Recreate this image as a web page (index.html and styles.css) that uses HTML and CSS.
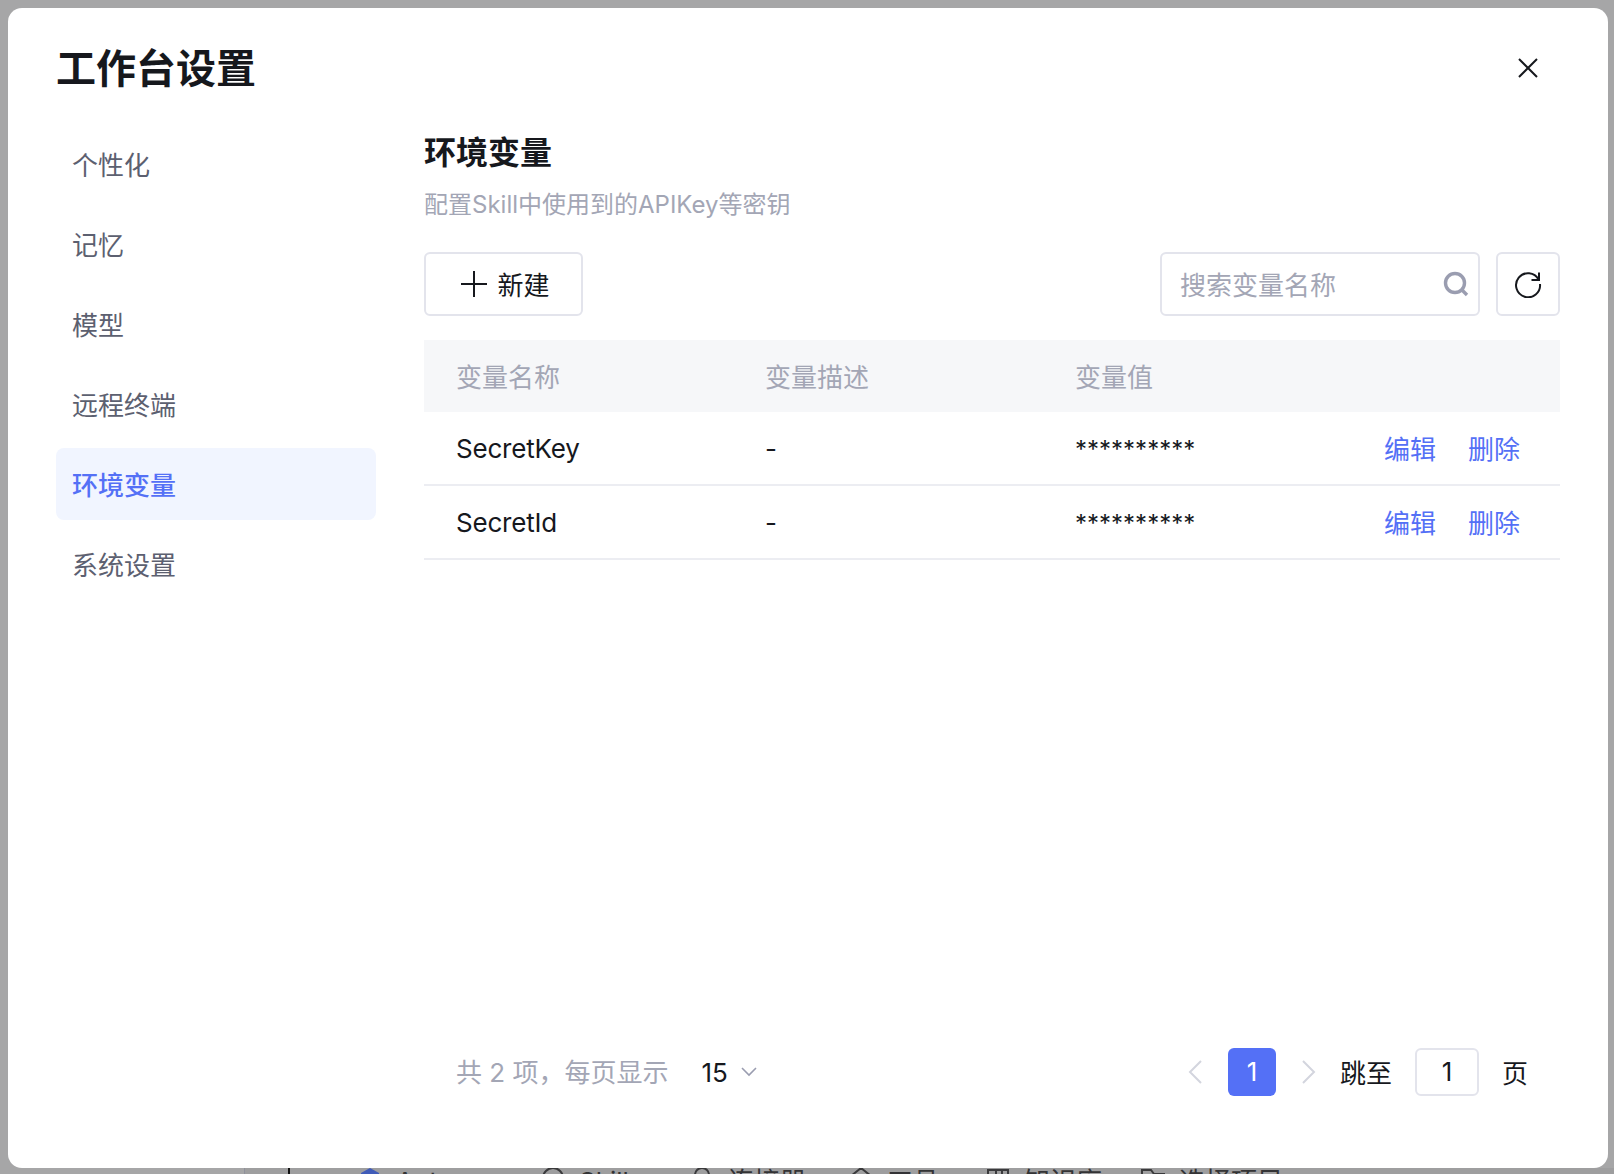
FILE: index.html
```html
<!DOCTYPE html>
<html lang="zh-CN">
<head>
    <meta charset="UTF-8">
    <title>工作台设置</title>
    <link rel="stylesheet" href="styles.css">
</head>
<body>
    <div class="backdrop-bar">
        <span class="bar-caret"></span>
        <span class="bar-item bar-auto"><svg class="bar-icon" viewBox="0 0 24 24"><path d="M12 2l9 5v10l-9 5-9-5V7z" fill="#3f5bb8"/></svg>Auto</span>
        <span class="bar-item bar-skill"><svg class="bar-icon" viewBox="0 0 24 24"><circle cx="12" cy="12" r="10" fill="none" stroke="#3a3a3c" stroke-width="2"/></svg>Skill</span>
        <span class="bar-item bar-conn"><svg class="bar-icon" viewBox="0 0 24 24"><path d="M5 22V9a7 7 0 0 1 14 0v13" fill="none" stroke="#3a3a3c" stroke-width="2"/></svg>连接器</span>
        <span class="bar-item bar-tool"><svg class="bar-icon" viewBox="0 0 24 24"><path d="M12 2l10 8v12H2V10z" fill="none" stroke="#3a3a3c" stroke-width="2"/></svg>工具</span>
        <span class="bar-item bar-know"><svg class="bar-icon bar-icon-low" viewBox="0 0 24 24"><path d="M2 1h20v22H2zM10 1v6h6V1" fill="none" stroke="#3a3a3c" stroke-width="2"/></svg>知识库</span>
        <span class="bar-item bar-proj"><svg class="bar-icon bar-icon-low" viewBox="0 0 24 24"><path d="M1 22V1h9l3 4h10v17z" fill="none" stroke="#3a3a3c" stroke-width="2"/></svg>选择项目</span>
    </div>

    <div class="modal">
        <div class="modal-header">
            <h1>工作台设置</h1>
            <svg class="close-icon" viewBox="0 0 20 20"><path d="M1 1l18 18M19 1L1 19"/></svg>
        </div>
        <div class="modal-body">
            <ul class="side-menu">
                <li>个性化</li>
                <li>记忆</li>
                <li>模型</li>
                <li>远程终端</li>
                <li class="active">环境变量</li>
                <li>系统设置</li>
            </ul>
            <div class="content">
                <h2>环境变量</h2>
                <p class="desc">配置Skill中使用到的APIKey等密钥</p>
                <div class="toolbar">
                    <button class="btn-new">
                        <svg class="plus-icon" viewBox="0 0 26 26"><path d="M13 0v26M0 13h26"/></svg>
                        <span class="btn-text">新建</span>
                    </button>
                    <div class="toolbar-right">
                        <div class="search-box">
                            <span class="btn-text">搜索变量名称</span>
                            <svg class="search-icon" viewBox="0 0 26 26"><circle cx="12" cy="12" r="9.5"/><path d="M19 19l5 5"/></svg>
                        </div>
                        <button class="btn-refresh">
                            <svg class="refresh-icon" viewBox="0 0 28 28"><path d="M24.6 9.5A12 12 0 1 0 26 14"/><path d="M25 2.5v7.5h-7.5"/></svg>
                        </button>
                    </div>
                </div>
                <div class="table">
                    <div class="row head">
                        <div>变量名称</div>
                        <div>变量描述</div>
                        <div>变量值</div>
                        <div></div>
                    </div>
                    <div class="row">
                        <div class="var-name">SecretKey</div>
                        <div>-</div>
                        <div class="masked">**********</div>
                        <div class="actions"><a>编辑</a><a>删除</a></div>
                    </div>
                    <div class="row">
                        <div class="var-name">SecretId</div>
                        <div>-</div>
                        <div class="masked">**********</div>
                        <div class="actions"><a>编辑</a><a>删除</a></div>
                    </div>
                </div>
                <div class="pagination">
                    <div class="page-total">
                        <span class="muted">共 2 项，每页显示</span>
                        <span class="page-size">15</span>
                        <svg class="size-arrow" viewBox="0 0 16 10"><path d="M1 1l7 7 7-7"/></svg>
                    </div>
                    <div class="page-nav">
                        <svg class="page-arrow" viewBox="0 0 14 24"><path d="M13 1L2 12l11 11"/></svg>
                        <span class="page-current">1</span>
                        <svg class="page-arrow" viewBox="0 0 14 24"><path d="M1 1l11 11L1 23"/></svg>
                        <span class="jump-label">跳至</span>
                        <span class="page-input">1</span>
                        <span class="page-unit">页</span>
                    </div>
                </div>
            </div>
        </div>
    </div>
</body>
</html>
```

FILE: styles.css
```css
* {
    box-sizing: border-box;
}
html, body {
    margin: 0;
    height: 100%;
    overflow: hidden;
}
body {
    background: #a6a6a7;
    color: #16181d;
    font-family: Inter, "Noto Sans CJK SC", sans-serif;
    font-size: 26px;
    padding: 8px 6px 6px 8px;
}
.backdrop-bar {
    position: absolute;
    left: 244px;
    top: 1168px;
    right: 0;
    height: 6px;
    overflow: hidden;
    background: #9e9e9f;
    border-left: 1px solid #8f919b;
    color: #333335;
    font-size: 26px;
}
.bar-caret {
    position: absolute;
    left: 43px;
    top: 0;
    width: 2px;
    height: 6px;
    background: #111;
}
.bar-item {
    position: absolute;
    top: -2px;
    display: flex;
    align-items: flex-start;
    gap: 14px;
    line-height: 32px;
    white-space: nowrap;
}
.bar-icon {
    width: 24px;
    height: 24px;
}
.bar-icon-low {
    margin-top: 3px;
}
.bar-auto { left: 113px; }
.bar-skill { left: 296px; }
.bar-conn { left: 445px; }
.bar-tool { left: 604px; }
.bar-know { left: 741px; }
.bar-proj { left: 896px; }

.modal {
    position: relative;
    height: 1160px;
    background: #fff;
    border-radius: 14px;
    padding: 0 48px;
    display: flex;
    flex-direction: column;
}
.modal-header {
    height: 120px;
    display: flex;
    align-items: center;
    justify-content: space-between;
    padding-right: 22px;
}
.modal-header h1 {
    margin: 2px 0 0;
    font-size: 40px;
    font-weight: 600;
    line-height: 56px;
}
.close-icon {
    width: 20px;
    height: 20px;
    fill: none;
    stroke: #16181d;
    stroke-width: 2;
}
.modal-body {
    flex-grow: 1;
    display: flex;
    gap: 48px;
    min-height: 0;
}
.side-menu {
    list-style: none;
    margin: 0;
    padding: 0;
    width: 320px;
    flex-shrink: 0;
    display: flex;
    flex-direction: column;
    gap: 8px;
}
.side-menu li {
    height: 72px;
    line-height: 75px;
    padding-left: 16px;
    border-radius: 8px;
    color: #5c6070;
}
.side-menu li.active {
    background: #f1f5ff;
    color: #5470f6;
    font-weight: 500;
}
.content {
    flex-grow: 1;
    display: flex;
    flex-direction: column;
    min-width: 0;
    padding: 3px 0 72px;
}
.content h2 {
    margin: 0;
    font-size: 32px;
    font-weight: 600;
    line-height: 44px;
}
.desc {
    margin: 12px 0 0;
    font-size: 24px;
    line-height: 36px;
    color: #a3a6b5;
}
.toolbar {
    margin-top: 29px;
    display: flex;
    justify-content: space-between;
}
.toolbar-right {
    display: flex;
    gap: 16px;
}
button {
    font: inherit;
    color: inherit;
    background: #fff;
    cursor: pointer;
}
.btn-new, .btn-refresh, .search-box {
    height: 64px;
    border: 2px solid #e3e4ec;
    border-radius: 6px;
    display: flex;
    align-items: center;
}
.btn-new {
    width: 159px;
    justify-content: center;
    gap: 10px;
    padding: 0 0 0 4px;
}
.btn-text {
    padding-bottom: 2px;
}
.plus-icon {
    width: 26px;
    height: 26px;
    fill: none;
    stroke: #16181d;
    stroke-width: 2;
}
.search-box {
    width: 320px;
    padding: 0 9px 0 18px;
    justify-content: space-between;
    color: #a3a6b5;
}
.search-icon {
    width: 26px;
    height: 26px;
    fill: none;
    stroke: #9a9db0;
    stroke-width: 3.4;
}
.btn-refresh {
    width: 64px;
    justify-content: center;
    padding: 0;
}
.refresh-icon {
    width: 28px;
    height: 28px;
    fill: none;
    stroke: #16181d;
    stroke-width: 2;
}
.table {
    margin-top: 24px;
}
.row {
    display: grid;
    grid-template-columns: 341px 310px 1fr 176px;
    height: 74px;
    align-items: center;
    border-bottom: 2px solid #ecedf2;
}
.row > div:first-child {
    padding-left: 32px;
}
.row.head {
    height: 72px;
    background: #f6f7f9;
    border-bottom: none;
    color: #a3a6b5;
    padding-bottom: 2px;
}
.var-name {
    letter-spacing: -0.2px;
}
.masked {
    font-size: 24px;
    padding-top: 2px;
}
.actions {
    display: flex;
    gap: 32px;
    padding-bottom: 2px;
}
.actions a {
    color: #5470f6;
}
.pagination {
    margin-top: auto;
    height: 48px;
    display: flex;
    align-items: center;
    justify-content: space-between;
    padding: 0 32px;
}
.page-total, .page-nav {
    display: flex;
    align-items: center;
}
.muted {
    color: #a3a6b5;
    padding-bottom: 3px;
}
.page-size {
    margin-left: 33px;
}
.size-arrow {
    margin-left: 13px;
    width: 16px;
    height: 10px;
    fill: none;
    stroke: #9a9db0;
    stroke-width: 1.6;
}
.page-arrow {
    width: 14px;
    height: 24px;
    fill: none;
    stroke: #d3d5de;
    stroke-width: 2;
}
.page-current {
    width: 48px;
    height: 48px;
    margin: 0 26px;
    background: #5470f6;
    border-radius: 6px;
    color: #fff;
    text-align: center;
    line-height: 48px;
}
.jump-label, .page-unit {
    padding-bottom: 2px;
}
.jump-label {
    margin-left: 24px;
}
.page-input {
    width: 64px;
    height: 48px;
    margin: 0 23px;
    border: 2px solid #e3e4ec;
    border-radius: 6px;
    text-align: center;
    line-height: 44px;
}
```
